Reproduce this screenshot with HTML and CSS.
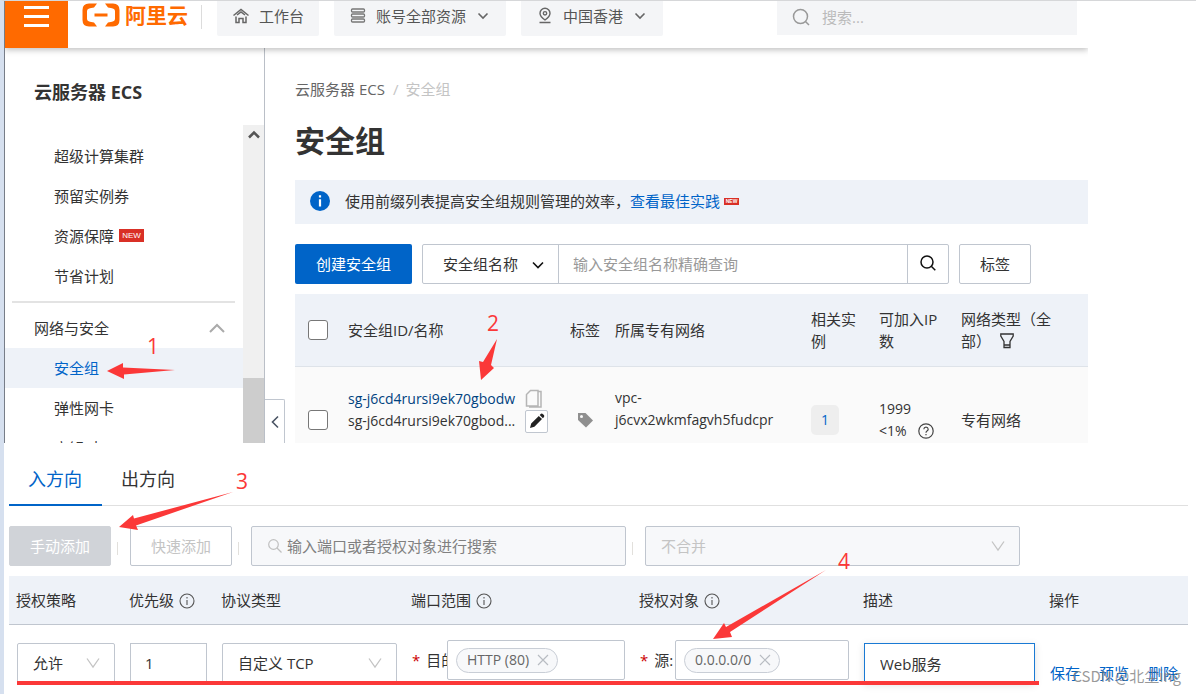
FILE: index.html
```html
<!DOCTYPE html>
<html lang="zh-CN">
<head>
<meta charset="utf-8">
<title>安全组 - 云服务器 ECS</title>
<link rel="stylesheet" href="styles.css">
</head>
<body>
<div class="page">
  <section class="console">
    <header class="topbar">
      <button class="menu-toggle" aria-label="菜单"><span></span><span></span><span></span></button>
      <a class="logo" href="#">
        <svg width="38" height="24" viewBox="0 0 38 24" aria-hidden="true"><path d="M15 .5 12 4.500 8 5.200Q5 5.800 5 8.500V15.500Q5 18.200 8 18.800L12 19.500 15 23.500H7Q.5 23.500.5 17V7Q.5 .5 7 .5ZM23 .5 26 4.500 30 5.200Q33 5.800 33 8.500V15.500Q33 18.200 30 18.800L26 19.500 23 23.500H31Q37.500 23.500 37.500 17V7Q37.500 .5 31 .5ZM12.500 10.500H25.500V13.500H12.500Z" fill="#ff6a00"/></svg>
        <span>阿里云</span>
      </a>
      <span class="topbar-rule"></span>
      <nav class="topnav">
        <button class="top-item">
          <svg width="18" height="18" viewBox="0 0 18 18" fill="none" stroke="#666" stroke-width="1.500"><path d="M1.500 8.500 9 2.500 16.500 8.500M4 9.500V15.500H7V11.500H11V15.500H14V9.500M5 8 9 5 13 8"/></svg>
          <span>工作台</span>
        </button>
        <button class="top-item">
          <svg width="18" height="18" viewBox="0 0 18 18" fill="none" stroke="#777" stroke-width="1.300"><rect x="2.500" y="2" width="13" height="3" rx="1"/><rect x="2.500" y="7" width="13" height="3" rx="1"/><rect x="2.500" y="12" width="13" height="3" rx="1"/></svg>
          <span>账号全部资源</span>
          <svg class="caret" width="12" height="12" viewBox="0 0 12 12" fill="none" stroke="#666" stroke-width="1.600"><path d="M1.500 3.500 6 8 10.500 3.500"/></svg>
        </button>
        <button class="top-item">
          <svg width="18" height="18" viewBox="0 0 18 18" fill="none" stroke="#666" stroke-width="1.400"><path d="M9 13Q4 9.500 4 6.200A5 5 0 0 1 14 6.200Q14 9.500 9 13ZM3.500 15.500H14.500"/><circle cx="9" cy="6.300" r="1.700"/></svg>
          <span>中国香港</span>
          <svg class="caret" width="12" height="12" viewBox="0 0 12 12" fill="none" stroke="#666" stroke-width="1.600"><path d="M1.500 3.500 6 8 10.500 3.500"/></svg>
        </button>
      </nav>
      <label class="top-search">
        <svg width="18" height="18" viewBox="0 0 18 18" fill="none" stroke="#999" stroke-width="1.500"><circle cx="8.500" cy="8.500" r="7"/><path d="M13.500 13.500 17 17"/></svg>
        <input type="text" placeholder="搜索..." aria-label="搜索">
      </label>
    </header>

    <div class="console-body">
      <aside class="sidebar">
        <h2 class="sidebar-title">云服务器 ECS</h2>
        <div class="sidebar-scroll">
          <nav class="menu">
            <a class="menu-item" href="#">超级计算集群</a>
            <a class="menu-item" href="#">预留实例券</a>
            <a class="menu-item" href="#">资源保障<span class="badge-new">NEW</span></a>
            <a class="menu-item" href="#">节省计划</a>
            <hr class="menu-rule">
            <button class="menu-group">网络与安全
              <svg width="16" height="10" viewBox="0 0 16 10" fill="none" stroke="#aaa" stroke-width="2"><path d="M1 9 8 2 15 9"/></svg>
            </button>
            <a class="menu-item is-active" href="#">安全组</a>
            <a class="menu-item" href="#">弹性网卡</a>
            <a class="menu-item" href="#">密钥对</a>
          </nav>
          <div class="scrollbar">
            <svg width="12" height="9" viewBox="0 0 12 9" fill="none" stroke="#555" stroke-width="2.500"><path d="M1 7.500 6 2.500 11 7.500"/></svg>
            <span class="scroll-thumb"></span>
          </div>
        </div>
      </aside>

      <main class="content">
        <nav class="breadcrumb"><a href="#">云服务器 ECS</a><span class="slash">/</span><span>安全组</span></nav>
        <h1 class="title">安全组</h1>
        <div class="notice">
          <svg width="20" height="20" viewBox="0 0 20 20"><circle cx="10" cy="10" r="10" fill="#0064c8"/><path d="M8.900 4.300H11.100V6.600H8.900ZM8.900 8.200H11.100V15.500H8.900Z" fill="#fff"/></svg>
          <p>使用前缀列表提高安全组规则管理的效率，<a href="#">查看最佳实践</a></p>
          <span class="badge-tiny">NEW</span>
        </div>
        <div class="toolbar">
          <button class="btn-primary">创建安全组</button>
          <div class="search-group">
            <div class="select-box">
              <select aria-label="搜索条件"><option>安全组名称</option></select>
              <svg width="12" height="10" viewBox="0 0 12 10" fill="none" stroke="#111" stroke-width="1.600"><path d="M1 2.500 6 7.500 11 2.500"/></svg>
            </div>
            <input type="text" placeholder="输入安全组名称精确查询" aria-label="安全组名称">
            <button aria-label="查询"><svg width="16" height="16" viewBox="0 0 16 16" fill="none" stroke="#111" stroke-width="1.500"><circle cx="7" cy="7" r="6"/><path d="M11.300 11.300 15.300 15.300"/></svg></button>
          </div>
          <button class="btn-plain">标签</button>
        </div>
        <table class="groups">
          <colgroup><col class="g-check"><col class="g-name"><col class="g-tag"><col class="g-vpc"><col class="g-inst"><col class="g-ip"><col></colgroup>
          <thead>
            <tr>
              <th><input type="checkbox" aria-label="全选"></th>
              <th>安全组ID/名称</th>
              <th>标签</th>
              <th>所属专有网络</th>
              <th>相关实例</th>
              <th>可加入IP数</th>
              <th>网络类型（全部）<svg class="filter" width="14" height="16" viewBox="0 0 14 16" fill="none" stroke="#333" stroke-width="1.300"><path d="M.8 1H13.200V3L10 8.500V14.500H4V8.500L.8 3ZM4 12H10"/></svg></th>
            </tr>
          </thead>
          <tbody>
            <tr>
              <td><input type="checkbox" aria-label="选择 sg-j6cd4rursi9ek70gbodw"></td>
              <td class="name-cell">
                <div class="name-line"><a href="#">sg-j6cd4rursi9ek70gbodw</a>
                  <button class="copy" aria-label="复制"><svg width="18" height="20" viewBox="0 0 18 20" fill="none" stroke="#b5b5b5" stroke-width="1.500"><path d="M5.500 1.500H13V17H1.500V5.500ZM13 2.500H16V18H4"/></svg></button></div>
                <div class="name-line"><span>sg-j6cd4rursi9ek70gbod...</span>
                  <button class="edit" aria-label="编辑"><svg width="16" height="16" viewBox="0 0 16 16" fill="#222"><path d="M1 15 2.200 10.500 9.800 2.900 13 6.100 5.400 13.700ZM10.700 2 12 .8Q13 .2 14 1.200L14.900 2.100Q15.700 3 15 4L13.900 5.200Z"/></svg></button></div>
              </td>
              <td><svg class="tag-icon" width="17" height="16" viewBox="0 0 17 16"><path d="M1 1H8.500L16 8.500 9 15.500 1 8Z" fill="#8f8f8f"/><circle cx="4.500" cy="4.500" r="1.500" fill="#fafafa"/></svg></td>
              <td class="vpc-cell">vpc-<br>j6cvx2wkmfagvh5fudcpr</td>
              <td><a class="count" href="#">1</a></td>
              <td class="ip-cell">1999<br>&lt;1%<svg width="16" height="16" viewBox="0 0 16 16" fill="none" stroke="#444" stroke-width="1.200"><circle cx="8" cy="8" r="7.200"/><path d="M5.800 6.200Q6 4.200 8 4.200T10.200 6.200Q10.200 7.200 9 7.900 8 8.500 8 9.800M8 11V12.300"/></svg></td>
              <td>专有网络</td>
            </tr>
          </tbody>
        </table>
        <button class="collapse" aria-label="收起"><svg width="8" height="14" viewBox="0 0 8 14" fill="none" stroke="#4a5464" stroke-width="1.600"><path d="M7 1.500 1.500 7 7 12.500"/></svg></button>
      </main>
    </div>
  </section>

  <section class="rules">
    <div class="tabs" role="tablist">
      <button class="tab is-active" role="tab" aria-selected="true">入方向</button>
      <button class="tab" role="tab" aria-selected="false">出方向</button>
    </div>
    <div class="rule-tools">
      <button class="btn-muted" disabled>手动添加</button>
      <span class="sep"></span>
      <button class="btn-ghost" disabled>快速添加</button>
      <span class="sep"></span>
      <label class="rule-search">
        <svg width="14" height="14" viewBox="0 0 14 14" fill="none" stroke="#c0c0c0" stroke-width="1.200"><circle cx="5.500" cy="5.500" r="4.800"/><path d="M9 9 13.500 13.500"/></svg>
        <input type="text" placeholder="输入端口或者授权对象进行搜索" aria-label="搜索规则">
      </label>
      <span class="sep"></span>
      <div class="field-select merge">
        <select disabled aria-label="合并方式"><option>不合并</option></select>
        <svg width="14" height="12" viewBox="0 0 14 12" fill="none" stroke="#c4c4c4" stroke-width="1.300"><path d="M1 1.500 7 10 13 1.500"/></svg>
      </div>
    </div>
    <table class="rule-table">
      <colgroup><col class="r-policy"><col class="r-priority"><col class="r-protocol"><col class="r-port"><col class="r-source"><col class="r-desc"><col></colgroup>
      <thead>
        <tr>
          <th>授权策略</th>
          <th>优先级<svg class="info" width="16" height="16" viewBox="0 0 16 16" fill="none" stroke="#555" stroke-width="1.100"><circle cx="8" cy="8" r="7"/><path d="M8 7V12M8 4V5.500"/></svg></th>
          <th>协议类型</th>
          <th>端口范围<svg class="info" width="16" height="16" viewBox="0 0 16 16" fill="none" stroke="#555" stroke-width="1.100"><circle cx="8" cy="8" r="7"/><path d="M8 7V12M8 4V5.500"/></svg></th>
          <th>授权对象<svg class="info" width="16" height="16" viewBox="0 0 16 16" fill="none" stroke="#555" stroke-width="1.100"><circle cx="8" cy="8" r="7"/><path d="M8 7V12M8 4V5.500"/></svg></th>
          <th>描述</th>
          <th>操作</th>
        </tr>
      </thead>
      <tbody>
        <tr>
          <td><div class="field-select"><select aria-label="授权策略"><option>允许</option></select><svg width="14" height="12" viewBox="0 0 14 12" fill="none" stroke="#c4c4c4" stroke-width="1.300"><path d="M1 1.500 7 10 13 1.500"/></svg></div></td>
          <td><input class="field" type="text" value="1" aria-label="优先级"></td>
          <td><div class="field-select"><select aria-label="协议类型"><option>自定义 TCP</option></select><svg width="14" height="12" viewBox="0 0 14 12" fill="none" stroke="#c4c4c4" stroke-width="1.300"><path d="M1 1.500 7 10 13 1.500"/></svg></div></td>
          <td class="tag-cell"><div class="tag-row"><span class="tag-label"><i>*</i>目的</span><div class="tag-field"><span class="pill">HTTP (80)<button aria-label="移除 HTTP (80)"><svg width="12" height="12" viewBox="0 0 12 12" stroke="#b8bcc2" stroke-width="1.200"><path d="M1 1 11 11M11 1 1 11"/></svg></button></span></div></div></td>
          <td class="tag-cell"><div class="tag-row"><span class="tag-label"><i>*</i>源:</span><div class="tag-field"><span class="pill">0.0.0.0/0<button aria-label="移除 0.0.0.0/0"><svg width="12" height="12" viewBox="0 0 12 12" stroke="#b8bcc2" stroke-width="1.200"><path d="M1 1 11 11M11 1 1 11"/></svg></button></span></div></div></td>
          <td><input class="field is-focus" type="text" value="Web服务" aria-label="描述"></td>
          <td class="actions-cell"><div class="actions"><a href="#">保存</a><a href="#">预览</a><a href="#">删除</a></div></td>
        </tr>
      </tbody>
    </table>
  </section>

  <svg class="notes" width="1196" height="694" viewBox="0 0 1196 694" fill="#fb3838">
    <path d="M107 371 123 363 123 367.500 175 370 124 374.500 124 379Z"/>
    <path d="M497 339 483 362 479 361 481 380 494 368 491 365Z"/>
    <path d="M119 527 133 515 134 518.500 233 492 136 525.500 138 530Z"/>
    <path d="M713 639 724 623 726 627 826 570 730 632 732 637Z"/>
    <path d="M17 681H1039V685H17Z"/>
    <text x="147" y="354">1</text>
    <text x="487" y="331">2</text>
    <text x="236" y="489">3</text>
    <text x="838" y="569">4</text>
  </svg>
  <span class="watermark">CSDN @北尘ing</span>
</div>
</body>
</html>
```
FILE: styles.css
```css
* { box-sizing: border-box; }
body { margin: 0; background: #fff; color: #333; font: 15px/22px "Open Sans", "Noto Sans CJK SC", sans-serif; }
button, input, select { font: inherit; color: inherit; }
button { margin: 0; padding: 0; border: 0; background: none; cursor: pointer; }
a { color: inherit; text-decoration: none; }
svg { display: block; flex: none; }
select { appearance: none; display: block; width: 100%; border: 0; background: none; outline: 0; opacity: 1; }
input[type="text"] { outline: 0; border-radius: 0; min-width: 0; }

.page { position: relative; min-height: 100vh; overflow: hidden; border-left: 4px solid #d6e0ef; border-top: 1px solid #d6d7d9; }
.console { margin-right: 108px; border-left: 1px solid #777d88; }

.topbar { position: relative; z-index: 1; display: flex; align-items: flex-start; height: 47px; padding-right: 11px; background: #fff; box-shadow: 0 2px 6px rgba(0, 0, 0, .25); clip-path: inset(0 0 -10px 0); }
.menu-toggle { display: flex; flex-direction: column; align-items: center; gap: 6px; width: 63px; height: 47px; padding-top: 5px; background: #ff6a00; }
.menu-toggle span { width: 25px; height: 3px; background: #fff; }
.logo { display: flex; gap: 5px; align-items: center; margin-left: 14px; padding-top: 2px; color: #ff6a00; font-size: 21px; line-height: 24px; font-weight: 700; }
.topbar-rule { width: 1px; height: 24px; margin: 4px 15px 0 13px; background: #dcdcdc; }
.topnav { display: flex; gap: 15px; }
.top-item { display: flex; align-items: center; height: 35px; padding: 0 15px 6px; background: #f4f5f7; border-radius: 0 0 2px 2px; color: #555; }
.top-item span { margin-left: 9px; white-space: nowrap; }
.caret { margin: 0 2px 0 11px; }
.top-search { display: flex; align-items: center; gap: 12px; width: 300px; height: 34px; margin-left: auto; padding: 0 15px 3px; background: #f4f5f7; }
.top-search input { flex: 1; padding: 0; border: 0; background: none; }
.top-search input::placeholder { color: #bbb; }

.console-body { display: flex; }
.sidebar { display: flex; flex-direction: column; width: 260px; flex: none; contain: size; overflow: hidden; border-right: 1px solid #babfc7; }
.sidebar-title { margin: 0; padding: 33px 29px 22px; font-size: 18px; line-height: 22px; font-weight: 700; }
.sidebar-scroll { display: flex; flex: 1; min-height: 0; }
.menu { flex: 1; padding-top: 11px; }
.menu-item { display: flex; align-items: center; height: 40px; padding-left: 49px; }
.menu-item.is-active { background: #eef2f8; color: #0064c8; }
.badge-new { margin: 0 0 2px 5px; width: 25px; background: #d93026; color: #fff; font: 8px/13px "Liberation Sans", sans-serif; text-align: center; }
.menu-rule { height: 2px; margin: 5px 8px 5px 7px; border: 0; background: #e3e3e3; }
.menu-group { display: flex; align-items: center; justify-content: space-between; width: 100%; height: 40px; padding: 0 18px 0 29px; }
.scrollbar { display: flex; flex-direction: column; justify-content: space-between; align-items: center; width: 21px; padding-top: 5px; background: #f0f0f0; }
.scroll-thumb { width: 100%; height: 65px; background: #cdcdcd; }

.content { position: relative; flex: 1; min-width: 0; padding: 30px 0 0 30px; }
.breadcrumb { color: #c4c4c4; }
.breadcrumb a { color: #666; }
.slash { padding: 0 7px 0 8px; }
.title { margin: 20px 0 18px; font-size: 30px; line-height: 42px; font-weight: 700; }
.notice { display: flex; align-items: center; min-height: 44px; padding: 0 15px 2px; background: #eef2f8; }
.notice p { margin: 0 4px 0 15px; }
.notice a { color: #0064c8; }
.badge-tiny { width: 15px; background: #d93026; color: #fff; font: 700 5px/7px "Liberation Sans", sans-serif; text-align: center; }
.toolbar { display: flex; gap: 10px; margin: 20px 0 10px; height: 40px; }
.btn-primary { width: 117px; border-radius: 2px; background: #0064c8; color: #fff; }
.search-group { display: flex; width: 527px; border: 1px solid #c0c6cf; border-radius: 2px; }
.search-group > input { flex: 1; padding: 0 14px; border: 0; border-left: 1px solid #c0c6cf; border-right: 1px solid #c0c6cf; background: none; }
.search-group > input::placeholder { color: #999; }
.search-group > button { display: flex; align-items: center; justify-content: center; width: 40px; padding-bottom: 2px; }
.select-box { position: relative; width: 135px; }
.select-box select { height: 38px; padding: 0 20px; }
.select-box svg { position: absolute; right: 14px; top: 15px; pointer-events: none; }
.btn-plain { width: 72px; border: 1px solid #c0c6cf; border-radius: 2px; }

.groups, .rule-table { width: 100%; border-collapse: separate; border-spacing: 0; table-layout: fixed; }
.groups th, .rule-table th { background: #eef2f8; text-align: left; font-weight: 400; }
.groups th { height: 73px; padding: 0 20px 0 0; border-bottom: 1px solid #dee3e9; }
.groups td { padding: 30px 0 0; background: #fafafa; height: 76px; }
.groups th:first-child, .groups td:first-child { padding-left: 13px; }
.groups input { appearance: none; display: block; width: 20px; height: 20px; margin: 0; border: 1px solid #777; border-radius: 3px; background: #fff; }
.g-check { width: 53px; }
.g-name { width: 222px; }
.g-tag { width: 45px; }
.g-vpc { width: 196px; }
.g-inst { width: 68px; }
.g-ip { width: 82px; }
.groups th:nth-child(3) { padding-right: 0; }
.groups th:last-child { padding-right: 30px; }
.filter { display: inline-block; margin-left: 9px; vertical-align: -2px; }
.groups .name-cell { padding: 21px 0 11px; font-size: 14px; }
.groups .vpc-cell { padding: 20px 0 12px; font-size: 14px; }
.name-line { display: flex; align-items: center; height: 22px; gap: 10px; }
.name-line a { color: #00427f; }
.edit { display: grid; place-items: center; width: 23px; height: 23px; border: 1px solid #c0c6cf; border-radius: 2px; background: #fff; }
.tag-icon { margin-left: 7px; }
.count { display: grid; place-items: center; width: 28px; height: 30px; border-radius: 5px; background: #eee; color: #0064c8; font-size: 14px; }
.groups .ip-cell { font-size: 14px; }
.ip-cell svg { display: inline-block; margin-left: 11px; vertical-align: -3px; }
.collapse { position: absolute; left: 0; bottom: 0; display: grid; place-items: center; width: 20px; height: 44px; border: 1px solid #c0c6cf; border-width: 1px 1px 0 0; border-radius: 0 2px 0 0; background: #fff; }

.rules { padding: 15px 8px 0 5px; }
.tabs { display: flex; border-bottom: 1px solid #e0e0e0; }
.tab { height: 48px; padding: 0 20px 5px 19px; margin-bottom: -1px; border-bottom: 2px solid transparent; font-size: 18px; }
.tab.is-active { border-color: #0064c8; color: #0064c8; }
.rule-tools { display: flex; align-items: center; height: 40px; margin: 20px 0 10px; }
.btn-muted, .btn-ghost { width: 102px; height: 40px; border: 1px solid #c0c6cf; border-radius: 2px; color: #c4c4c4; }
.btn-muted { border-color: #d0d3d8; background: #d0d3d8; color: #fff; }
.sep { width: 1px; height: 13px; margin: 4px 12px 0 6px; background: #e2e0dc; }
.rule-search, .merge { width: 375px; height: 40px; border: 1px solid #c0c6cf; border-radius: 2px; background: #f7f8fa; }
.rule-search { display: flex; align-items: center; gap: 5px; padding: 0 16px; }
.rule-search input { flex: 1; padding: 0; border: 0; background: none; }
.rule-search input::placeholder { color: #808080; }
.field-select { position: relative; height: 40px; border: 1px solid #c0c6cf; border-radius: 2px; }
.field-select select { height: 38px; padding: 0 15px; }
.field-select svg { position: absolute; right: 14px; top: 13px; pointer-events: none; }
.merge select { color: #c4c4c4; }
.rule-table th { height: 49px; padding: 0 7px; border-bottom: 1px solid #c0c6cf; }
.rule-table td { padding: 18px 7px 0 8px; vertical-align: top; }
.rule-table .tag-cell { padding-top: 15px; }
.rule-table .actions-cell { padding: 37px 0 0 8px; }
.r-policy { width: 113px; }
.r-priority { width: 92px; }
.r-protocol { width: 190px; }
.r-port { width: 228px; }
.r-source { width: 224px; }
.r-desc { width: 186px; }
.info { display: inline-block; margin-left: 5px; vertical-align: -3px; }
.field { display: block; width: 100%; height: 40px; padding: 0 14px; border: 1px solid #c0c6cf; }
.field.is-focus { padding: 0 15px; border-color: #1a7ad4; box-shadow: 0 2px 8px rgba(0, 0, 0, .12); }
.tag-row { display: flex; align-items: center; height: 40px; }
.tag-label { width: 35px; flex: none; overflow: hidden; white-space: nowrap; }
.tag-label i { margin-right: 6px; color: #c00; font-style: normal; }
.tag-field { display: flex; align-items: center; flex: 1; height: 40px; padding-left: 8px; border: 1px solid #c0c6cf; border-radius: 2px; }
.pill { display: flex; align-items: center; gap: 8px; height: 25px; padding: 0 8px 0 10px; border: 1px solid #c9ced6; border-radius: 13px; background: #f7f8fa; color: #666; font-size: 14px; }
.actions { display: flex; gap: 19px; color: #0064c8; white-space: nowrap; }

.notes { position: absolute; left: -4px; top: -1px; z-index: 2; pointer-events: none; font: 21px "Open Sans", sans-serif; }
.watermark { position: absolute; right: 15px; bottom: 7px; z-index: 3; color: rgba(120, 120, 120, .75); font-family: "Noto Sans CJK SC", sans-serif; white-space: nowrap; }
```
